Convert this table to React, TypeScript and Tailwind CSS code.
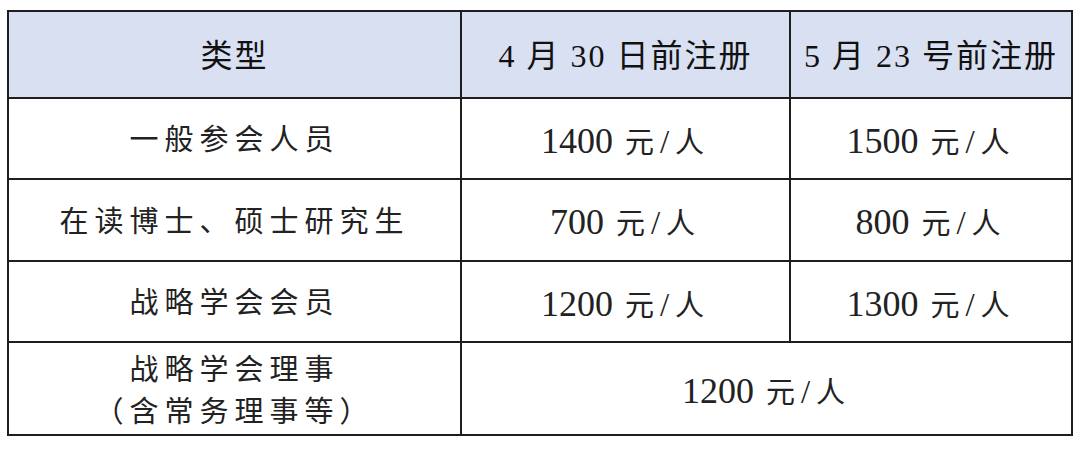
import React from "react";

const font = { fontFamily: '"Liberation Serif", "Noto Sans CJK SC", serif' };

function Cell({ children, head, className = "" }: { children: React.ReactNode; head?: boolean; className?: string }) {
  return (
    <div
      className={`flex items-center justify-center ${head ? "bg-[#d9e0f2] text-[32px] tracking-[2px] text-[#111] pt-[2px]" : "bg-white text-[29px] tracking-[6px] text-[#222] pt-[4px]"} ${className}`}
    >
      {children}
    </div>
  );
}

function Price({ n }: { n: string }) {
  return (
    <span className="flex items-baseline">
      <span className="text-[36px] tracking-[0px]">{n}</span>
      <span className="ml-[12px]">元<span className="text-[33px] tracking-[6px]">/</span>人</span>
    </span>
  );
}

export default function App() {
  return (
    <div className="w-[1080px] h-[450px] bg-white pt-[10px] pl-[7px]" style={font}>
      <div className="grid w-[1066px] grid-cols-[451px_327px_280px] grid-rows-[85px_79px_80px_79px_91px] gap-[2px] bg-[#1e1e1e] p-[2px] leading-none">
        <Cell head>类型</Cell>
        <Cell head>4 月 30 日前注册</Cell>
        <Cell head>5 月 23 号前注册</Cell>

        <Cell>一般参会人员</Cell>
        <Cell><Price n="1400" /></Cell>
        <Cell><Price n="1500" /></Cell>

        <Cell>在读博士、硕士研究生</Cell>
        <Cell><Price n="700" /></Cell>
        <Cell><Price n="800" /></Cell>

        <Cell>战略学会会员</Cell>
        <Cell><Price n="1200" /></Cell>
        <Cell><Price n="1300" /></Cell>

        <Cell className="flex-col leading-[42px]">
          <span>战略学会理事</span>
          <span>（含常务理事等）</span>
        </Cell>
        <Cell className="col-span-2"><Price n="1200" /></Cell>
      </div>
    </div>
  );
}
